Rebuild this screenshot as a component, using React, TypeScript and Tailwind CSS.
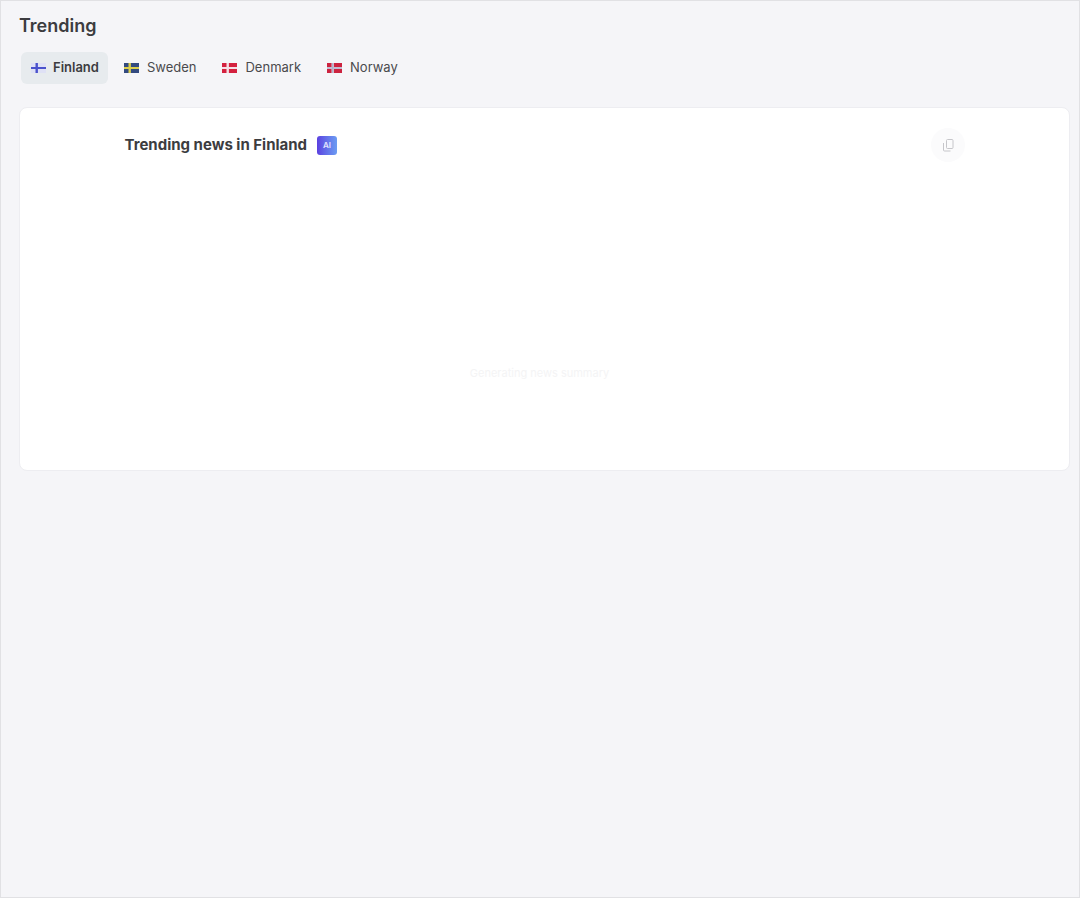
import { useState } from "react";

interface Country {
  name: string;
  field: string;
  cross: string;
  inner?: string;
}

const countries: Country[] = [
  { name: "Finland", field: "#dfe1f5", cross: "#4a52cc" },
  { name: "Sweden", field: "#334a80", cross: "#dccf4c" },
  { name: "Denmark", field: "#d4213f", cross: "#f6dfe6" },
  { name: "Norway", field: "#cc2340", cross: "#dccbd8", inner: "#a5aecb" },
];

const Flag = ({ field, cross, inner }: Country) => (
  <svg viewBox="0 0 15 10" className="h-[10px] w-[15px]" aria-hidden="true">
    <rect width="15" height="10" fill={field} />
    <path d="M4.5 0h2.4v10h-2.4zM0 4h15v2h-15z" fill={cross} />
    {inner && <path d="M5.2 0h1v10h-1zM0 4.5h15v1h-15z" fill={inner} />}
  </svg>
);

const CopyIcon = () => (
  <svg
    viewBox="0 0 12 13"
    className="h-[13px] w-[12px]"
    fill="none"
    stroke="currentColor"
    aria-hidden="true"
  >
    <rect x="4.5" y="0.5" width="6.5" height="9" rx="1" />
    <path d="M1.5 4v7a1 1 0 0 0 1 1h6" />
  </svg>
);

const App = () => {
  const [active, setActive] = useState("Finland");
  return (
    <div className="min-h-screen border border-[#e1e1e4] bg-[#f5f5f8] pt-[13px] pr-[9px] pb-6 pl-[18px] font-['Inter',sans-serif] text-[#3c3c3f]">
      <h1 className="text-lg leading-6 font-semibold">Trending</h1>
      <nav className="mt-[14px] flex gap-[6px] pl-[2px]">
        {countries.map((country) => (
          <button
            key={country.name}
            type="button"
            onClick={() => setActive(country.name)}
            className={
              country.name === active
                ? "flex h-8 items-center gap-[7px] rounded-md bg-[#e7ebee] px-[9px] pl-[10px] text-[13px] font-semibold"
                : "flex h-8 items-center gap-2 rounded-md px-[10px] text-[13px] text-[#4a4a4d]"
            }
          >
            <Flag {...country} />
            {country.name}
          </button>
        ))}
      </nav>
      <main className="mt-[23px] rounded-lg border border-[#ededf1] bg-white px-6 pt-5 pb-[89px]">
        <div className="mx-auto max-w-[840px]">
          <header className="flex items-center justify-between">
            <div className="flex items-center gap-[10px]">
              <h2 className="text-[15px] font-bold">
                Trending news in {active}
              </h2>
              <span className="flex h-[19px] w-5 items-center justify-center rounded-[3px] bg-linear-to-r from-[#5b3fe0] to-[#6c9cf2] text-[8px] font-semibold text-[#e4e4ff]">
                AI
              </span>
            </div>
            <button
              type="button"
              aria-label="Copy"
              className="flex size-[34px] items-center justify-center rounded-full bg-[#fbfbfc] text-[#c6c6ca]"
            >
              <CopyIcon />
            </button>
          </header>
          <p className="mt-[203px] pr-[10px] text-center text-[11px] leading-4 text-[#f4f4f5]">
            Generating news summary
          </p>
        </div>
      </main>
    </div>
  );
};

export default App;
